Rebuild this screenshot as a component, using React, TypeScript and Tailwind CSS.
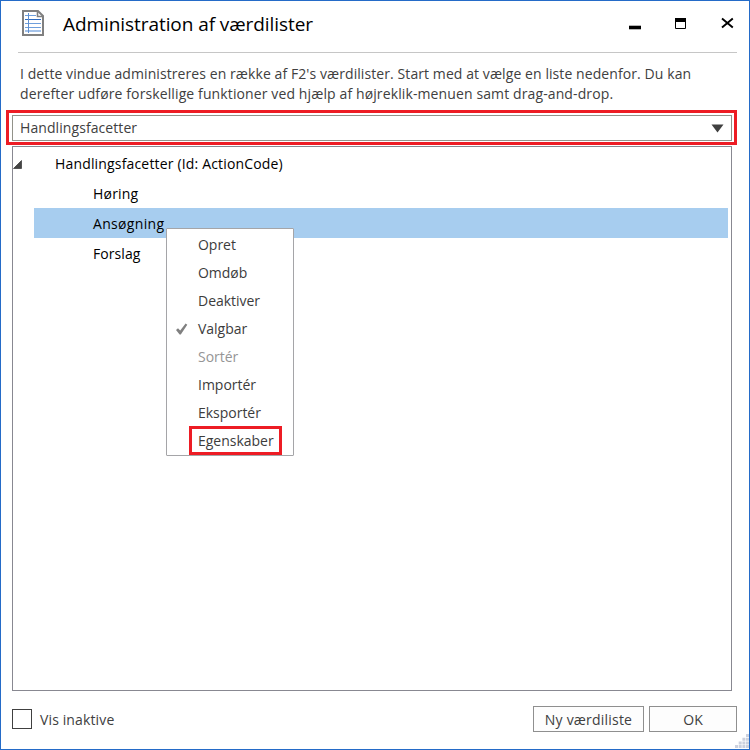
import clsx from 'clsx';

const treeItems = [
  { label: 'Høring', selected: false, tracking: 'tracking-[0.2px]' },
  { label: 'Ansøgning', selected: true, tracking: 'tracking-[0.32px]' },
  { label: 'Forslag', selected: false, tracking: 'tracking-[0.08px]' },
];

const menuItems = [
  { label: 'Opret' },
  { label: 'Omdøb' },
  { label: 'Deaktiver' },
  { label: 'Valgbar', checked: true },
  { label: 'Sortér', disabled: true },
  { label: 'Importér' },
  { label: 'Eksportér' },
  { label: 'Egenskaber', highlighted: true },
];

function DocumentIcon() {
  return (
    <svg width="22" height="26" viewBox="0 0 22 26" fill="none">
      <path d="M1 1H16L21 6V25H1Z" fill="#fff" stroke="#808080" strokeWidth="2" />
      <path d="M15.5 1V6.5H21" stroke="#808080" strokeWidth="1.6" />
      <path d="M3 5.5H14M3 13.5H19M3 17.5H19" stroke="#6f9fdc" />
      <path d="M3 9.5H19" stroke="#2f6bc0" />
      <path d="M3 21H19" stroke="#a5c3ea" strokeWidth="2" />
      <path d="M6.5 3V23" stroke="#5f8fd0" />
    </svg>
  );
}

function TitleBar() {
  return (
    <header className="flex h-[51px] shrink-0 items-start pl-[21px] pr-[15px]">
      <div className="pt-[9px]">
        <DocumentIcon />
      </div>
      <h1 className="ml-[19px] mt-[9px] grow whitespace-nowrap text-[19px] leading-[28px] tracking-[-0.07px] text-black">
        Administration af værdilister
      </h1>
      <div className="mt-[16px] flex gap-[34px]">
        <svg width="12" height="13" viewBox="0 0 12 13">
          <path d="M0 8H12V13H0Z" fill="#b5b5b5" />
          <path d="M0 9H12V12H0Z" fill="#000" />
        </svg>
        <svg width="11" height="12" viewBox="0 0 11 12" fill="none">
          <path d="M0.5 1.5H10.5V11.5H0.5Z" stroke="#000" />
          <path d="M0 1H11V5H0Z" fill="#000" />
        </svg>
        <svg className="ml-px" width="13" height="12" viewBox="0 0 13 12">
          <path d="M1 1.5L11.8 10.5M11.8 1.5L1 10.5" stroke="#000" strokeWidth="1.9" />
        </svg>
      </div>
    </header>
  );
}

function ContextMenu() {
  return (
    <ul className="absolute left-[153px] top-[81px] h-[228px] w-[128px] rounded-[1px] border border-[#a5a5a8] bg-white pt-[2px] text-[#3c3c3c]">
      {menuItems.map((item) => (
        <li key={item.label} className="relative flex h-7 items-center pl-[31px]">
          {item.checked && (
            <svg className="absolute left-[9px] top-[8px]" width="12" height="12" viewBox="0 0 12 12">
              <path d="M0 7L2 5.2L4.2 7.6L9.6 0.6L11.3 1.8L4.8 11.6H3.6Z" fill="#808080" />
            </svg>
          )}
          {item.highlighted && (
            <span className="absolute -top-px left-[22px] h-[29px] w-[93px] border-3 border-[#ed1c24]" />
          )}
          <span className={clsx('tracking-[-0.02px]', item.disabled && 'text-[#959595]')}>{item.label}</span>
        </li>
      ))}
    </ul>
  );
}

function ValueTree() {
  return (
    <section className="relative ml-[11px] mt-px h-[545px] w-[720px] shrink-0 border border-[#888891] pt-px text-black">
      <div className="flex h-[30px] items-center pt-px">
        <svg className="mt-px" width="9" height="9" viewBox="0 0 9 9">
          <path d="M8.5 0.5V8.5H0.5Z" fill="#444" stroke="#222" strokeWidth="0.6" />
        </svg>
        <span className="ml-[33px] tracking-[0.165px]">Handlingsfacetter (Id: ActionCode)</span>
      </div>
      {treeItems.map((item) => (
        <div
          key={item.label}
          className={clsx('ml-[21px] mr-[3px] flex h-[30px] items-center pl-[59px] pt-px', item.selected && 'bg-[#a7cdef]')}
        >
          <span className={item.tracking}>{item.label}</span>
        </div>
      ))}
      <ContextMenu />
    </section>
  );
}

function ResizeGrip() {
  return (
    <svg className="absolute bottom-px right-0" width="14" height="14" viewBox="0 0 14 14" fill="#ccd1de">
      <path d="M11 0h3v3h-3zM7.4 3.7h3v3h-3zM11 3.7h3v3h-3zM3.7 7.4h3v3h-3zM7.4 7.4h3v3h-3zM11 7.4h3v3h-3zM0 11h3v3H0zM3.7 11h3v3h-3zM7.4 11h3v3h-3zM11 11h3v3h-3z" />
    </svg>
  );
}

export default function App() {
  return (
    <div className="relative flex h-[750px] w-[750px] flex-col overflow-hidden border border-[#246bc8] bg-white font-['Open_Sans','Noto_Sans',sans-serif] text-[14px] leading-5 text-[#404040]">
      <TitleBar />
      <div className="ml-[17px] h-px w-[719px] shrink-0 bg-[#c6c6c6]" />
      <div className="h-[57px] shrink-0 whitespace-nowrap pl-[19px] pt-[11px]">
        <p className="tracking-[0.083px]">
          I dette vindue administreres en række af F2's værdilister. Start med at vælge en liste nedenfor. Du kan
        </p>
        <p className="tracking-[0.115px]">
          derefter udføre forskellige funktioner ved hjælp af højreklik-menuen samt drag-and-drop.
        </p>
      </div>

      {/* Value list selector */}
      <div className="ml-[5px] h-[35px] w-[731px] shrink-0 border-3 border-[#ed1c24] pl-[3px] pt-[2px]">
        <div className="flex h-[26px] w-[720px] items-center justify-between border border-[#92928a] pl-[7px] pr-[7px]">
          <span className="tracking-[0.08px]">Handlingsfacetter</span>
          <svg width="13" height="9" viewBox="0 0 13 9">
            <path d="M0.5 0.5H12.5L6.5 8.5Z" fill="#404040" />
          </svg>
        </div>
      </div>

      <ValueTree />

      <footer className="flex h-[56px] shrink-0 items-start pl-[11px] pr-[12px] pt-[15px]">
        <label className="flex h-[26px] items-center gap-2">
          <span className="size-5 border border-[#404040]" />
          <span className="pt-px tracking-[0.13px]">Vis inaktive</span>
        </label>
        <div className="ml-auto flex gap-[5px]">
          <button className="h-[26px] w-[111px] whitespace-nowrap border border-[#8f8f8f] bg-[#fdfdfd] pt-px tracking-[0.2px]">
            Ny værdiliste
          </button>
          <button className="h-[26px] w-[88px] border border-[#8f8f8f] bg-[#fdfdfd] pt-px">OK</button>
        </div>
      </footer>
      <ResizeGrip />
    </div>
  );
}
